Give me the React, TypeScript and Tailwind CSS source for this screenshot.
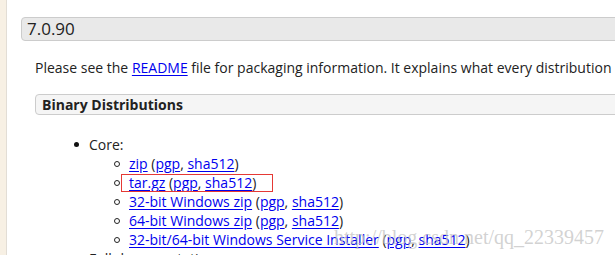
import React from "react";

type Dist = { label: string; boxed?: boolean };

const coreItems: Dist[] = [
  { label: "zip" },
  { label: "tar.gz", boxed: true },
  { label: "32-bit Windows zip" },
  { label: "64-bit Windows zip" },
  { label: "32-bit/64-bit Windows Service Installer" },
];

function Link({ children }: { children: React.ReactNode }) {
  return <a className="text-[#0000ee] underline underline-offset-2">{children}</a>;
}

export default function App() {
  return (
    <div
      className="flex w-[615px] h-[255px] overflow-hidden bg-white text-[#222] relative"
      style={{ fontFamily: '"Open Sans", "Noto Sans", sans-serif' }}
    >
      <div className="w-[7px] shrink-0 bg-[#f7f0e4] border-r border-[#e2ddd5]" />
      <div className="flex-1 min-w-0 pl-[14px] pt-[17px]">
        <div className="h-[24px] -mr-[10px] rounded-[4px] border border-[#cccccc] bg-[#e9e9e9] pl-[5px] text-[17px] leading-[22px]">
          7.0.90
        </div>
        <p className="mt-[17px] pl-[14px] text-[14px] leading-[19px] whitespace-nowrap">
          Please see the <Link>README</Link> file for packaging information. It explains what every distribution contains.
        </p>
        <div className="mt-[17px] ml-[14px] -mr-[10px] h-[21px] rounded-[4px] border border-[#cccccc] bg-[#f5f5f5] pl-[6px] text-[14px] font-bold leading-[19px]">
          Binary Distributions
        </div>
        <ul className="mt-[20px] text-[14px] leading-[19px]">
          <li className="flex items-center pl-[53px]">
            <span className="w-[5px] h-[5px] rounded-full bg-[#111] mr-[10px]" />
            Core:
          </li>
          {coreItems.map((d) => (
            <li key={d.label} className="flex items-center pl-[93px] whitespace-nowrap">
              <span className="w-[6px] h-[6px] rounded-full border border-[#222] mr-[9px] shrink-0" />
              <span className="relative">
                <Link>{d.label}</Link> (<Link>pgp</Link>, <Link>sha512</Link>)
                {d.boxed && (
                  <span className="absolute -left-[8px] top-[1px] w-[152px] h-[18px] border border-[#e53935]" />
                )}
              </span>
            </li>
          ))}
          <li className="flex items-center pl-[53px]">
            <span className="w-[5px] h-[5px] rounded-full bg-[#111] mr-[10px]" />
            Full documentation:
          </li>
        </ul>
      </div>
      <div
        className="absolute right-[11px] top-[227px] text-[20px] leading-[20px] text-[#c4c4c4]/75 whitespace-nowrap"
        style={{ fontFamily: '"Liberation Serif", serif' }}
      >
        http://blog.csdn.net/qq_22339457
      </div>
    </div>
  );
}
